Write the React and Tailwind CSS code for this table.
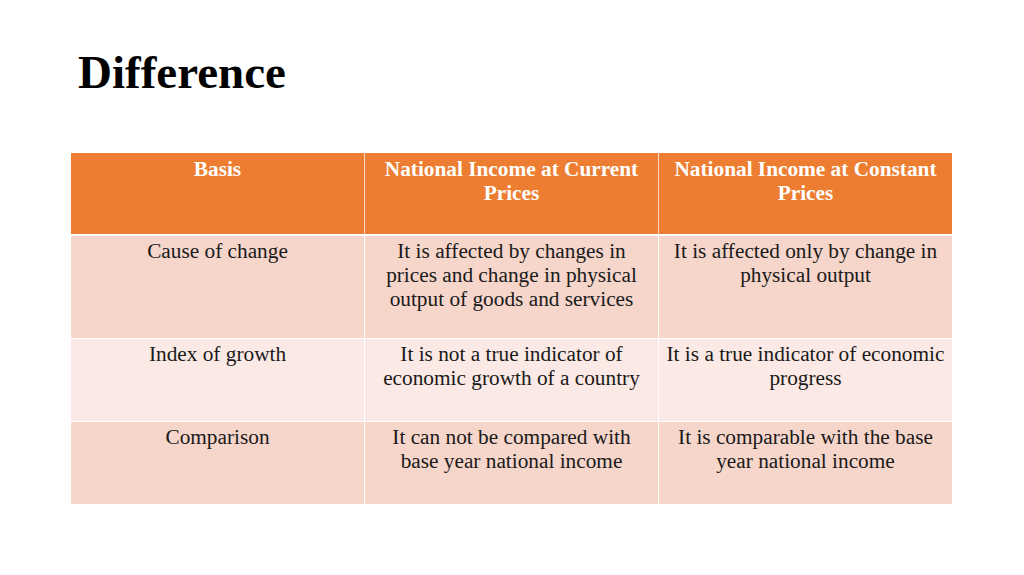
const rows = [
  {
    basis: 'Cause of change',
    current: 'It is affected by changes in prices and change in physical output of goods and services',
    constant: 'It is affected only by change in physical output',
    bg: 'bg-[#f6d5cb]',
    h: 'h-[103px]',
  },
  {
    basis: 'Index of growth',
    current: 'It is not a true indicator of economic growth of a country',
    constant: 'It is a true indicator of economic progress',
    bg: 'bg-[#fae9e4]',
    h: 'h-[83px]',
  },
  {
    basis: 'Comparison',
    current: 'It can not be compared with base year national income',
    constant: 'It is comparable with the base year national income',
    bg: 'bg-[#f6d5cb]',
    h: 'h-[82px]',
  },
]

export default function App() {
  return (
    <div className="w-[1024px] h-[575px] bg-white font-['Liberation_Serif',serif] text-[#1a1a1a]">
      <div className="pl-[78px] pt-[44px] h-[153px]">
        <h1 className="text-[47px] leading-[56px] font-bold text-black">Difference</h1>
      </div>

      <div className="ml-[71px] w-[881px] text-[21.3px] leading-[24px]">
        {/* header */}
        <div className="grid grid-cols-[293px_294px_294px] h-[83px] bg-[#ed7d31] border-b-[2px] border-white text-white font-bold">
          <div className="px-2 pt-[4px] text-center">Basis</div>
          <div className="px-2 pt-[4px] text-center border-l border-white/70">National Income at Current Prices</div>
          <div className="px-2 pt-[4px] text-center border-l border-white/70">National Income at Constant Prices</div>
        </div>

        {rows.map((row, i) => (
          <div
            key={i}
            className={`grid grid-cols-[293px_294px_294px] ${row.h} ${row.bg} ${i < rows.length - 1 ? 'border-b border-white' : ''}`}
          >
            <div className="px-2 pt-[3px] text-center">{row.basis}</div>
            <div className="px-3 pt-[3px] text-center border-l border-white">{row.current}</div>
            <div className="px-1 pt-[3px] text-center border-l border-white">{row.constant}</div>
          </div>
        ))}
      </div>
    </div>
  )
}
